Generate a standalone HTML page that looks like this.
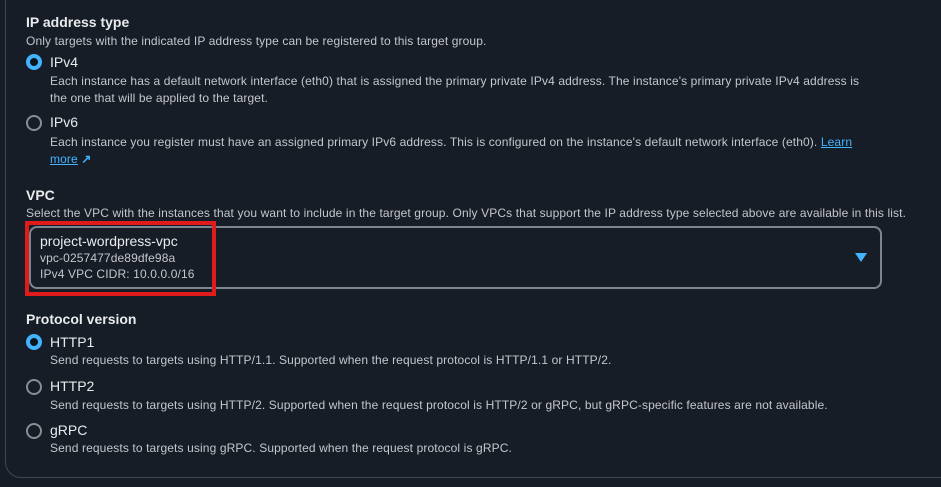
<!DOCTYPE html>
<html><head><style>
body{margin:0;width:941px;height:487px;background:#161d26;font-family:"Liberation Sans",sans-serif;position:relative;overflow:hidden}
.card{position:absolute;left:5px;top:-20px;width:960px;height:496px;border:1px solid #414750;border-radius:16px}
.t{position:absolute;white-space:nowrap}
.h{font-weight:bold;font-size:14px;color:#e9ebed}
.d{font-size:12px;color:#c6c6cd;letter-spacing:0.12px}
.l{font-size:14px;color:#e9ebed}
.r{position:absolute;width:12px;height:12px;border:2px solid #8c8c94;border-radius:50%}
.r.on{border:4px solid #42b4ff;width:8px;height:8px;background:#0f141a}
a{color:#42b4ff;text-decoration:underline}
</style></head><body>
<div class="card"></div>
<div class="t h" style="left:26px;top:14px">IP address type</div>
<div class="t d" style="left:26px;top:34px">Only targets with the indicated IP address type can be registered to this target group.</div>
<div class="r on" style="left:26px;top:54px"></div>
<div class="t l" style="left:50px;top:54px">IPv4</div>
<div class="t d" style="left:50px;top:73px;line-height:17px">Each instance has a default network interface (eth0) that is assigned the primary private IPv4 address. The instance's primary private IPv4 address is<br>the one that will be applied to the target.</div>
<div class="r" style="left:26px;top:115px"></div>
<div class="t l" style="left:50px;top:114px">IPv6</div>
<div class="t d" style="left:50px;top:134px;line-height:17px">Each instance you register must have an assigned primary IPv6 address. This is configured on the instance's default network interface (eth0). <a>Learn</a><br><a>more</a> <span style="color:#42b4ff;font-weight:bold">&#x2197;</span></div>
<div class="t h" style="left:26px;top:187px">VPC</div>
<div class="t d" style="left:26px;top:206px">Select the VPC with the instances that you want to include in the target group. Only VPCs that support the IP address type selected above are available in this list.</div>
<div style="position:absolute;left:29px;top:226px;width:849px;height:59px;border:2px solid #7d8590;border-radius:8px"></div>
<div style="position:absolute;left:25px;top:221px;width:183px;height:67px;border:4px solid #e01b1b"></div>
<div class="t l" style="left:40px;top:233px">project-wordpress-vpc</div>
<div class="t d" style="left:40px;top:251px">vpc-0257477de89dfe98a</div>
<div class="t d" style="left:40px;top:267px">IPv4 VPC CIDR: 10.0.0.0/16</div>
<div style="position:absolute;left:855px;top:253px;width:0;height:0;border-left:6px solid transparent;border-right:6px solid transparent;border-top:9px solid #42b4ff"></div>
<div class="t h" style="left:26px;top:311px">Protocol version</div>
<div class="r on" style="left:26px;top:334px"></div>
<div class="t l" style="left:50px;top:334px">HTTP1</div>
<div class="t d" style="left:50px;top:353px">Send requests to targets using HTTP/1.1. Supported when the request protocol is HTTP/1.1 or HTTP/2.</div>
<div class="r" style="left:26px;top:379px"></div>
<div class="t l" style="left:50px;top:378px">HTTP2</div>
<div class="t d" style="left:50px;top:398px">Send requests to targets using HTTP/2. Supported when the request protocol is HTTP/2 or gRPC, but gRPC-specific features are not available.</div>
<div class="r" style="left:26px;top:423px"></div>
<div class="t l" style="left:50px;top:422px">gRPC</div>
<div class="t d" style="left:50px;top:441px">Send requests to targets using gRPC. Supported when the request protocol is gRPC.</div>
</body></html>
